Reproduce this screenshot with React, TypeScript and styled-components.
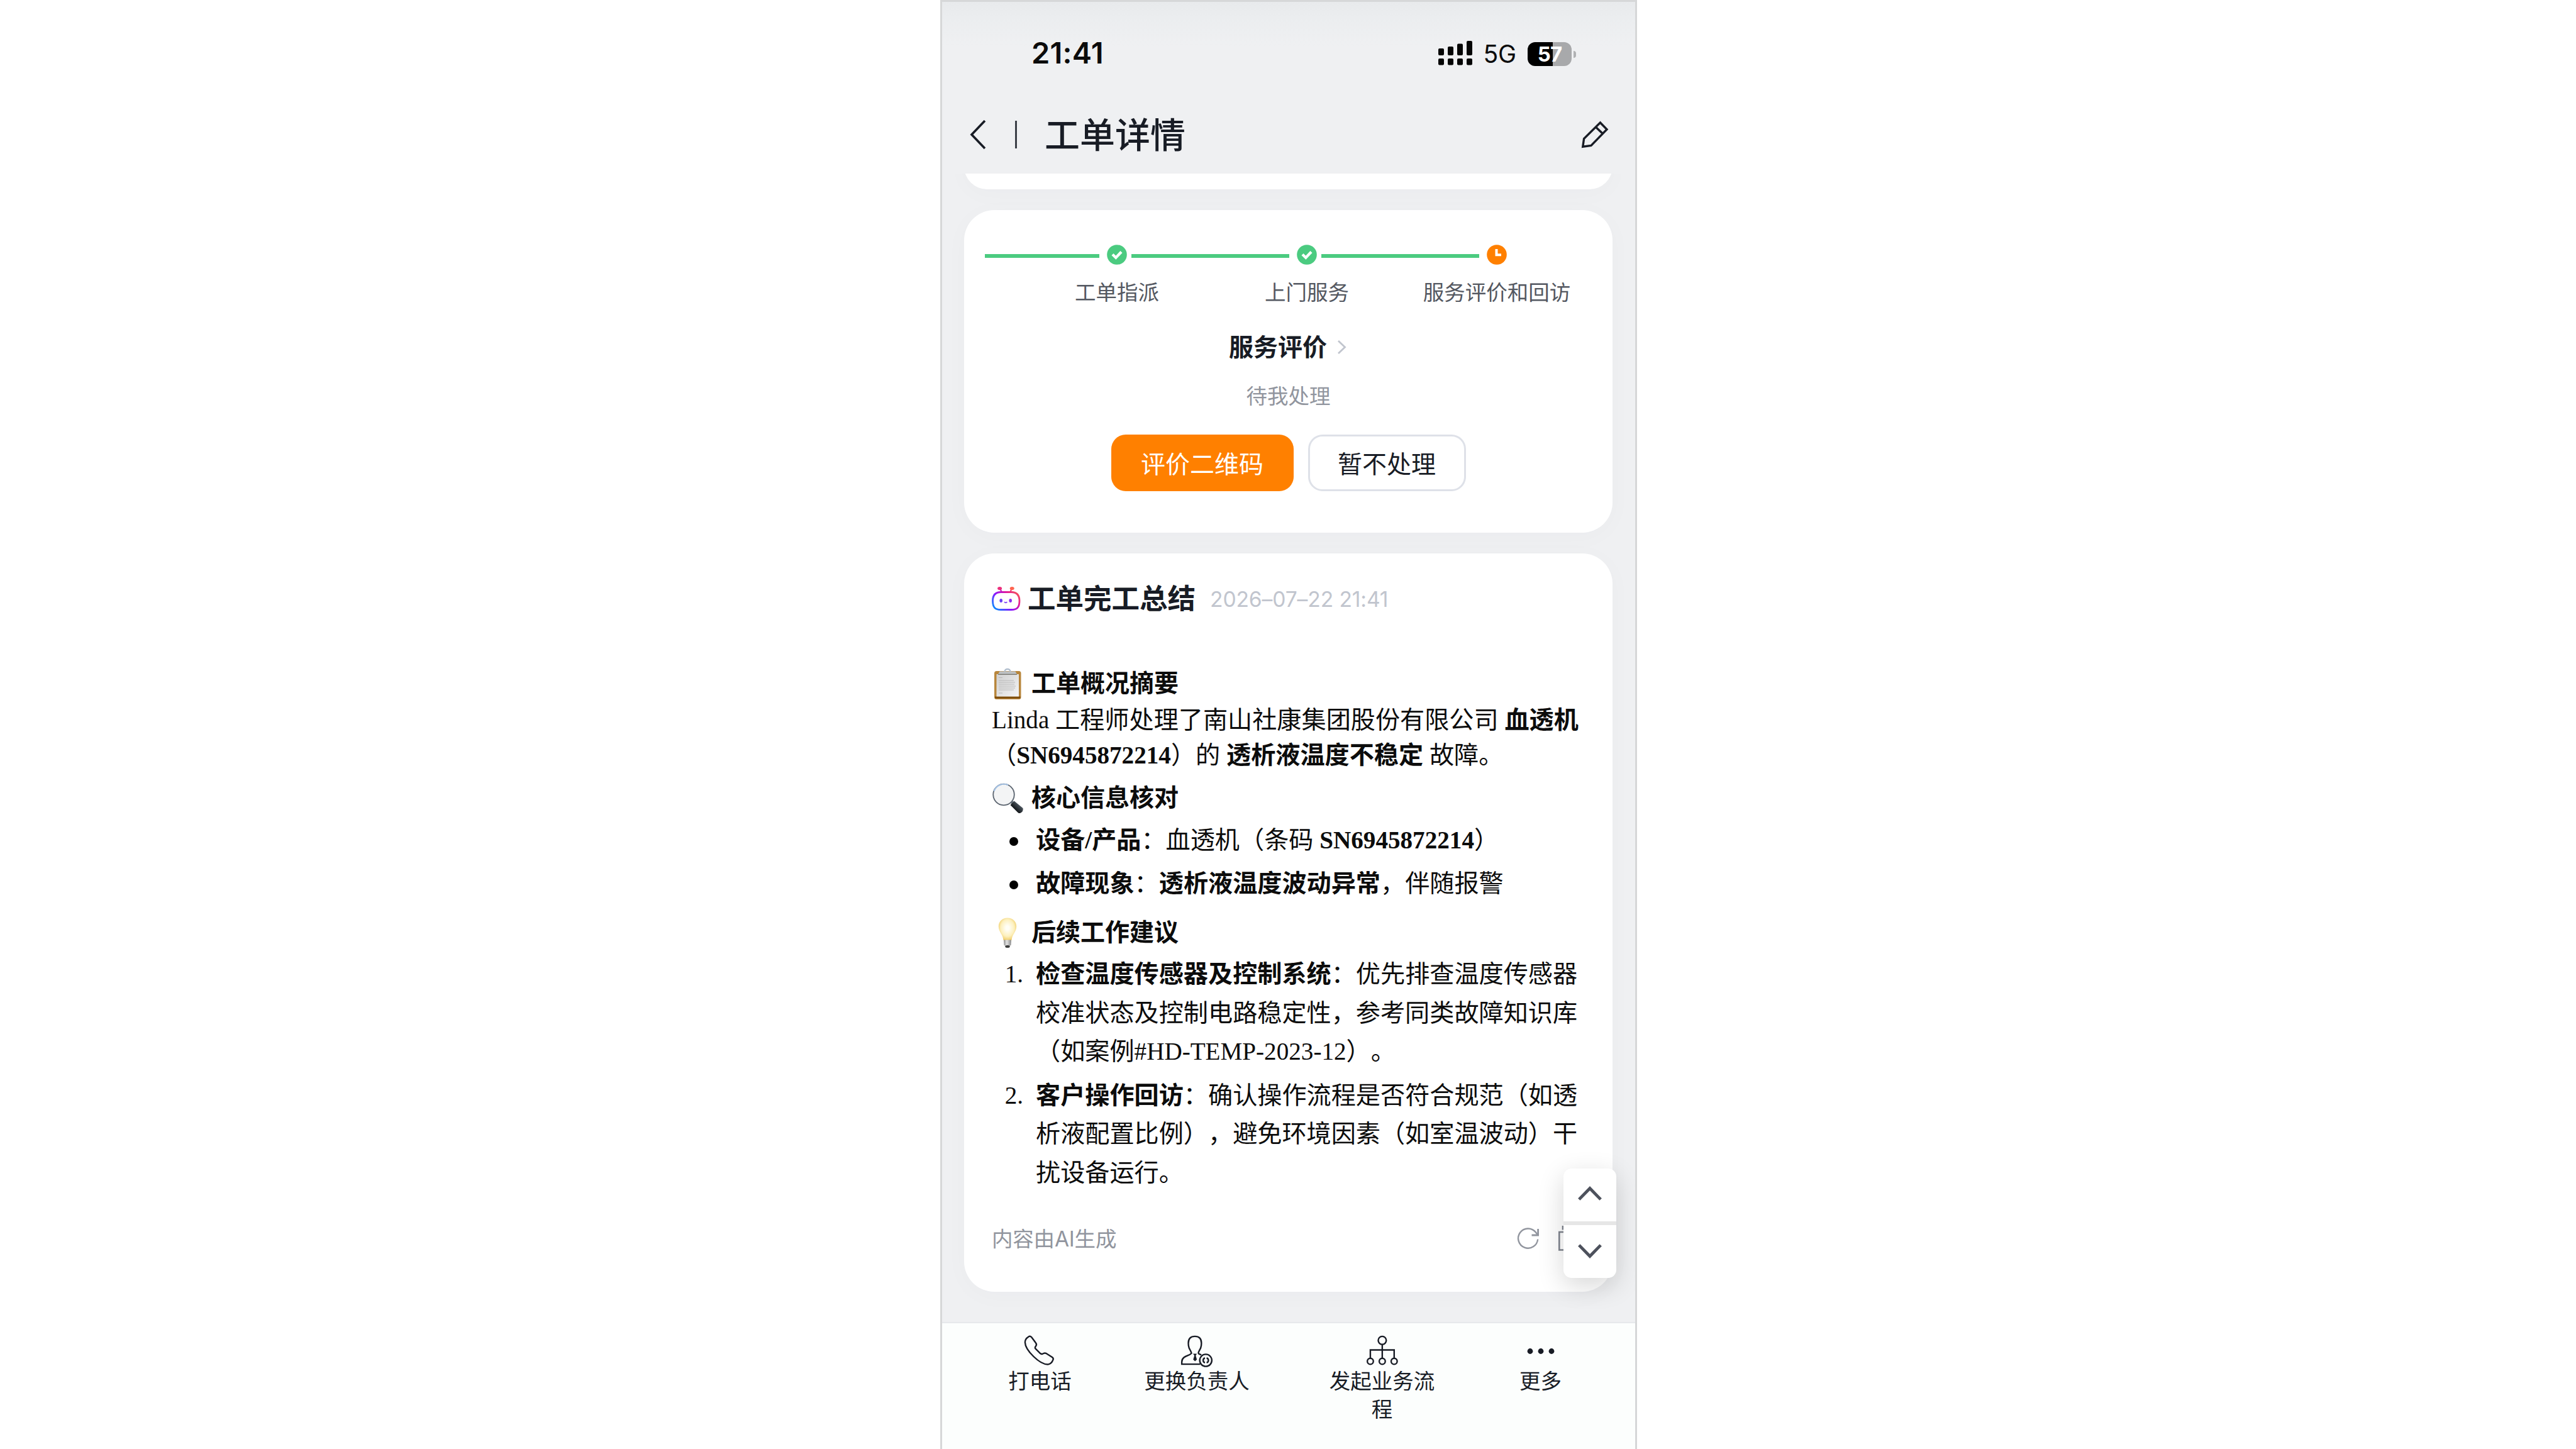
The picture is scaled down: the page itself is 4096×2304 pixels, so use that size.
import React from 'react';
import styled, { createGlobalStyle, css } from 'styled-components';

const sans = `Inter, "Noto Sans CJK SC", sans-serif`;
const serif = `"Liberation Serif", "Noto Sans CJK SC", serif`;

const GlobalStyle = createGlobalStyle`
  * {
    box-sizing: border-box;
  }

  body {
    margin: 0;
    background: #fff;
    font-family: ${sans};
    text-spacing-trim: space-all;
    color: #181c25;
  }

  svg {
    display: block;
    flex: none;
    overflow: visible;
  }
`;

const Page = styled.div`
  height: 2304px;
  padding-left: 1495px;
  overflow: hidden;
`;

const Phone = styled.div`
  display: flex;
  flex-direction: column;
  width: 1108px;
  height: 2304px;
  border: 3px solid #d6d7d8;
  border-bottom: 0;
  background: #eff0f2;
  position: relative;
  overflow: hidden;
`;

const Header = styled.header`
  flex: none;
  height: 273px;
  background: linear-gradient(#e8eaec 0, #ebedef 24px, #eff0f2 70px);
`;

const StatusBar = styled.div`
  display: flex;
  align-items: center;
  height: 162px;
  padding: 0 101px 0 142px;
`;

const Clock = styled.span`
  font-size: 47px;
  font-weight: 600;
  line-height: 56px;
  letter-spacing: 0.2px;
  color: #0b0b0b;
  margin-right: auto;
`;

const Network = styled.span`
  margin: 4px 0 0 18px;
  font-size: 39px;
  font-weight: 400;
  line-height: 48px;
  letter-spacing: -0.2px;
  color: #0b0b0b;
`;

const Battery = styled.div`
  display: flex;
  align-items: center;
  justify-content: center;
  position: relative;
  width: 70px;
  height: 38px;
  margin: 3px 0 0 18px;
  border-radius: 12px;
  background: linear-gradient(90deg, #000 40px, #a8a9ab 40px);
  font-size: 33px;
  font-weight: 700;
  line-height: 38px;
  letter-spacing: -1px;
  color: #fff;

  &::after {
    content: '';
    position: absolute;
    left: 73px;
    top: 14px;
    width: 4px;
    height: 11px;
    border-radius: 0 4px 4px 0;
    background: #b0b1b3;
  }
`;

const NavBar = styled.nav`
  display: flex;
  align-items: center;
  height: 98px;
  padding: 0 43px 0 44px;
`;

const NavDivider = styled.i`
  width: 3px;
  height: 44px;
  margin: 0 44px 0 46px;
  background: #3c4048;
`;

const NavTitle = styled.h1`
  margin: 2px auto 0 0;
  font-size: 56px;
  font-weight: 500;
  line-height: 80px;
`;

const Content = styled.main`
  flex: 1;
  min-height: 0;
  padding: 0 36px 0 35px;
  overflow: hidden;
`;

const cardStyle = css`
  background: #fff;
  border-radius: 48px;
  box-shadow: 0 6px 40px rgba(40, 60, 90, 0.025);
`;

const PreviousCard = styled.section`
  ${cardStyle}
  height: 73px;
  margin-top: -48px;
`;

const FlowCard = styled.section`
  ${cardStyle}
  height: 513px;
  margin-top: 33px;
  padding-top: 55px;
`;

const Steps = styled.div`
  display: grid;
  grid-template-columns: repeat(3, 302px);
  padding-left: 92px;
`;

const Step = styled.div`
  display: flex;
  flex-direction: column;
  align-items: center;
  position: relative;
`;

const StepLine = styled.i<{ $width: number }>`
  position: absolute;
  top: 15px;
  right: 179px;
  width: ${({ $width }) => $width}px;
  height: 6px;
  background: #4bcb80;
`;

const StepLabel = styled.span`
  margin-top: 19px;
  font-size: 33.5px;
  line-height: 50px;
  white-space: nowrap;
  color: #545861;
`;

const Task = styled.div`
  display: flex;
  flex-direction: column;
  align-items: center;
`;

const TaskTitle = styled.h2`
  display: flex;
  align-items: center;
  gap: 17px;
  margin: 34px 2px 0 0;
  font-size: 39px;
  font-weight: 700;
  line-height: 56px;
`;

const TaskState = styled.span`
  margin-top: 27px;
  font-size: 33.5px;
  line-height: 46px;
  color: #91959e;
`;

const Actions = styled.div`
  display: flex;
  gap: 23px;
  margin-top: 38px;
`;

const Button = styled.button<{ $primary?: boolean }>`
  width: ${({ $primary }) => ($primary ? 290 : 251)}px;
  height: 90px;
  padding: 0 0 3px;
  border: ${({ $primary }) => ($primary ? '0' : '3px solid #dee1e8')};
  border-radius: 23px;
  background: ${({ $primary }) => ($primary ? '#ff8000' : '#fff')};
  color: ${({ $primary }) => ($primary ? '#fff' : '#181c25')};
  font-family: ${sans};
  font-size: 39px;
`;

const SummaryCard = styled.section`
  ${cardStyle}
  height: 1174px;
  margin-top: 33px;
  padding: 40px 52px 0 44px;
`;

const SummaryHead = styled.div`
  display: flex;
  align-items: center;
  height: 64px;
`;

const SummaryTitle = styled.h2`
  margin: 0 23px 0 11px;
  font-size: 44.5px;
  font-weight: 700;
  line-height: 64px;
`;

const SummaryDate = styled.time`
  font-size: 33.6px;
  letter-spacing: -0.1px;
  color: #c1c5ce;
`;

const Report = styled.article`
  margin-top: 75px;
  font-family: ${serif};
  font-size: 39.15px;
  line-height: 56px;
  white-space: nowrap;
  color: #0c0c0c;

  p {
    margin: 2px 0 0;
  }
`;

const ReportHeading = styled.h3<{ $top?: number }>`
  display: flex;
  align-items: center;
  gap: 13px;
  height: 56px;
  margin: ${({ $top = 0 }) => $top}px 0 0;
  font-size: 39px;
  font-weight: 700;
`;

const ReportList = styled.div<{ $top: number; $gap: number }>`
  display: flex;
  flex-direction: column;
  gap: ${({ $gap }) => $gap}px;
  margin-top: ${({ $top }) => $top}px;
  line-height: 61.7px;
`;

const ReportItem = styled.div`
  display: grid;
  grid-template-columns: 50px 1fr;
  column-gap: 20px;
`;

const Marker = styled.span`
  text-align: right;
`;

const Bullet = styled.i`
  justify-self: end;
  width: 14px;
  height: 14px;
  margin: 26px 8px 0 0;
  border-radius: 50%;
  background: #000;
`;

const SummaryFoot = styled.div`
  display: flex;
  align-items: center;
  height: 50px;
  margin-top: 47px;
  font-size: 33.5px;
  letter-spacing: -0.2px;
  color: #91959e;
`;

const FootIcons = styled.div`
  display: flex;
  align-items: center;
  gap: 31px;
  margin: 3px 0 0 auto;
`;

const Pager = styled.div`
  position: absolute;
  left: 988px;
  top: 1855px;
  width: 84px;
  border-radius: 13px;
  background: #fff;
  box-shadow: 0 12px 42px rgba(0, 0, 0, 0.16);
`;

const PagerButton = styled.div`
  display: flex;
  align-items: center;
  justify-content: center;
  height: 84px;
  padding-bottom: 6px;

  & + & {
    height: 90px;
    padding-bottom: 1px;
    border-top: 6px solid #e6e6e6;
  }
`;

const TabBar = styled.footer`
  flex: none;
  display: grid;
  grid-template-columns: 249px 250px 339px 165px;
  height: 202px;
  padding: 19px 0 0 31px;
  border-top: 2px solid #e6e8eb;
  background: #fcfefd;
`;

const Tab = styled.div`
  display: flex;
  flex-direction: column;
  align-items: center;
  gap: 3px;
`;

const TabIcon = styled.div`
  display: flex;
  height: 48px;
`;

const TabLabel = styled.span`
  width: 172px;
  font-size: 33.5px;
  line-height: 45px;
  text-align: center;
`;

const SignalIcon = () => (
  <svg width="54" height="39" fill="#050505">
    <rect x="0" y="12" width="9" height="11" rx="2" />
    <rect x="15" y="9" width="9" height="14" rx="2" />
    <rect x="30" y="4.5" width="9" height="18.5" rx="2" />
    <rect x="45" y="0" width="9" height="23" rx="2" />
    {[0, 15, 30, 45].map((x) => (
      <rect key={x} x={x} y="28" width="9" height="10.5" rx="2" />
    ))}
  </svg>
);

const BackIcon = () => (
  <svg width="26" height="46" fill="none" stroke="#181c25" strokeWidth="3.6">
    <path d="M24 1 L3 23 L24 45" />
  </svg>
);

const PencilIcon = () => (
  <svg width="42" height="42" fill="none" stroke="#181c25" strokeWidth="3.4">
    <path d="M1.8 40.3 L3.6 27.5 L29.5 2 L40 12.8 L15 38.4 Z M22.3 9 L33.5 19.6" />
  </svg>
);

const CheckDot = () => (
  <svg width="32" height="32" viewBox="0 0 32 32" fill="none">
    <circle cx="16" cy="16" r="15.8" fill="#4bcb80" />
    <path d="M9 15.5 L14.3 20.7 L23 11.5" stroke="#fff" strokeWidth="4.4" />
  </svg>
);

const ClockDot = () => (
  <svg width="32" height="32" viewBox="0 0 32 32" fill="none">
    <circle cx="16" cy="16" r="15.8" fill="#ff8000" />
    <path d="M15.5 7 V16.3 H23" stroke="#fff" strokeWidth="4" />
  </svg>
);

const ChevronRight = () => (
  <svg width="14" height="22" fill="none" stroke="#c1c5ce" strokeWidth="2.8">
    <path d="M1 1 L11.5 11 L1 21" />
  </svg>
);

const RobotIcon = () => (
  <svg width="46" height="40" viewBox="0 0 46 40" fill="none">
    <defs>
      <linearGradient id="robot" x1="4" y1="38" x2="40" y2="2" gradientUnits="userSpaceOnUse">
        <stop offset="0.05" stopColor="#0f86ff" />
        <stop offset="0.38" stopColor="#8a16ff" />
        <stop offset="0.66" stopColor="#e0189c" />
        <stop offset="1" stopColor="#ff6a3c" />
      </linearGradient>
    </defs>
    <path
      d="M14.5 9.5 H31 C40 9.5 44 14 44 23.5 C44 34 40 37.5 31 37.5 H14.5 C5.5 37.5 1.5 34 1.5 23.5 C1.5 14 5.5 9.5 14.5 9.5 Z"
      stroke="url(#robot)"
      strokeWidth="2.8"
    />
    <path d="M15.5 9 L13.5 4.5 M29.5 9 L31.5 4.5" stroke="url(#robot)" strokeWidth="2" />
    <ellipse cx="12.6" cy="3.6" rx="3.5" ry="2.6" fill="#ec2f7c" />
    <ellipse cx="32.2" cy="3.6" rx="3.5" ry="2.6" fill="#ff6450" />
    <ellipse cx="14.7" cy="23" rx="2.3" ry="3" fill="#6a3df5" />
    <ellipse cx="29.7" cy="23" rx="2.3" ry="3" fill="#8a2df0" />
    <path d="M20 25.2 Q22.2 27.5 24.4 25.2" stroke="#7a3df5" strokeWidth="1.7" />
  </svg>
);

const ClipboardIcon = () => (
  <svg width="50" height="50" viewBox="0 0 50 50">
    <defs>
      <linearGradient id="paper" x1="0" y1="0" x2="1" y2="1">
        <stop offset="0" stopColor="#d0d0d0" />
        <stop offset="1" stopColor="#f4f4f4" />
      </linearGradient>
    </defs>
    <rect x="4" y="5" width="42.5" height="45" rx="3.5" fill="#b8863c" />
    <rect x="5" y="45.5" width="40.5" height="3" fill="#7d4d0c" />
    <rect x="7.5" y="10" width="35.5" height="35.5" fill="url(#paper)" />
    <path
      d="M11 15.5 h6 M11 20 h24 M11 23 h26 M11 26 h25 M11 29 h27 M11 32 h26 M11 35 h24 M11 40 h6"
      stroke="#b9b9b9"
      strokeWidth="1.2"
    />
    <path d="M20.5 6 C20.5 0.5 29.5 0.5 29.5 6" fill="none" stroke="#aebccb" strokeWidth="2.2" />
    <path d="M12.5 5.5 H37.5 L40 10 H10 Z" fill="#bdc0c2" />
    <path d="M10 9.7 H40 V11 H10 Z" fill="#76736c" />
  </svg>
);

const MagnifierIcon = () => (
  <svg width="50" height="50" viewBox="0 0 50 50">
    <defs>
      <linearGradient id="handle" x1="0" y1="1" x2="1" y2="0">
        <stop offset="0.3" stopColor="#0d1013" />
        <stop offset="0.75" stopColor="#555f69" />
      </linearGradient>
    </defs>
    <path d="M29 29 L34 33.5" stroke="#6d7881" strokeWidth="5" />
    <circle cx="19" cy="19.5" r="16.8" fill="#f3f4f5" stroke="#5c6570" strokeWidth="1.8" />
    <path d="M3.5 14 A16.8 16.8 0 0 1 26 4.2" fill="none" stroke="#a5c2e4" strokeWidth="2.2" />
    <path d="M29.5 36 L35.5 29.5 L49.5 41 Q51 46 45 49 Q42.5 49.5 41 47.5 Z" fill="url(#handle)" />
  </svg>
);

const BulbIcon = () => (
  <svg width="50" height="50" viewBox="0 0 50 50">
    <defs>
      <radialGradient id="glass" cx="0.5" cy="0.45" r="0.58">
        <stop offset="0.15" stopColor="#fffef6" />
        <stop offset="0.65" stopColor="#fdf0bd" />
        <stop offset="1" stopColor="#efc95f" />
      </radialGradient>
      <linearGradient id="cap">
        <stop offset="0" stopColor="#8d8d8d" />
        <stop offset="0.4" stopColor="#e4e4e4" />
        <stop offset="1" stopColor="#8b8b8b" />
      </linearGradient>
    </defs>
    <path
      d="M25 1.5 C33.5 1.5 39.2 7.5 39.2 15 C39.2 24 32.5 27 31.5 37 H18.5 C17.5 27 10.8 24 10.8 15 C10.8 7.5 16.5 1.5 25 1.5 Z"
      fill="url(#glass)"
    />
    <path d="M19 36.5 H31 L30.5 45 Q25 48.5 19.5 45 Z" fill="url(#cap)" />
    <ellipse cx="25" cy="47" rx="3.8" ry="2" fill="#3c3c3c" />
  </svg>
);

const RefreshIcon = () => (
  <svg width="34" height="34" fill="none" stroke="#91959e" strokeWidth="2.4">
    <path d="M32.2 18.5 A15.6 15.6 0 1 1 29 7.5 L32 11.5" />
    <path d="M32.6 2 V12 H22.5" strokeWidth="2.8" />
  </svg>
);

const CopyIcon = () => (
  <svg width="34" height="40" fill="none" stroke="#7f848e" strokeWidth="2.6">
    <path d="M1.3 10 H24 V38.5 H1.3 Z M7 6.5 V1.3 H32 V30 H28" />
  </svg>
);

const PagerArrow = ({ down }: { down?: boolean }) => (
  <svg width="38" height="23" fill="none" stroke="#4d515c" strokeWidth="4.8">
    <path d={down ? 'M1.8 1.8 L19 19.5 L36.2 1.8' : 'M1.8 21.2 L19 3.5 L36.2 21.2'} />
  </svg>
);

const PhoneIcon = () => (
  <svg width="52" height="48" viewBox="0 0 195 180" fill="none" stroke="#181c25" strokeWidth="9">
    <path d="M28 9 Q37 2 46 12 L71 46 Q79 56 71 66 Q64 75 69 80 L98 109 Q105 114 111 112 Q122 104 132 108 L170 132 Q178 138 174 147 Q166 170 146 174 C96 178 8 90 7 42 Q7 22 28 9 Z" />
  </svg>
);

const OwnerIcon = () => (
  <svg width="52" height="51.5" viewBox="0 0 195 193" fill="none" stroke="#181c25" strokeWidth="9">
    <path d="M65 110 C68 98 50 85 48 62 L47 48 C47 18 65 7 86 7 C107 7 125 18 125 48 L124 62 C122 85 104 98 107 108 C109 113 116 113 124 118" />
    <path d="M65 106 C64 124 8 118 8 160 V173 H118" />
    <path d="M75 111 H98 L91 122 L98 145 L87 156 L76 145 L83 122 Z" fill="#181c25" stroke="none" />
    <circle cx="151" cy="150" r="36" />
    <path d="M146 136 A14.5 14.5 0 0 0 146 164 M156 136 A14.5 14.5 0 0 1 156 164" />
  </svg>
);

const FlowIcon = () => (
  <svg width="52" height="48" viewBox="0 0 195 180" fill="none" stroke="#181c25" strokeWidth="9">
    <circle cx="97" cy="31" r="24" />
    <circle cx="26" cy="156" r="18" />
    <circle cx="97" cy="156" r="18" />
    <circle cx="168" cy="156" r="18" />
    <path d="M97 55 V138 M26 138 V88 H168 V138" />
  </svg>
);

const MoreIcon = () => (
  <svg width="44" height="48" fill="#181c25">
    <circle cx="5" cy="25.5" r="4.4" />
    <circle cx="22" cy="25.5" r="4.4" />
    <circle cx="39" cy="25.5" r="4.4" />
  </svg>
);

const steps = [
  { label: '工单指派', line: 182, icon: <CheckDot /> },
  { label: '上门服务', line: 251, icon: <CheckDot /> },
  { label: '服务评价和回访', line: 251, icon: <ClockDot /> },
];

const tabs = [
  { label: '打电话', icon: <PhoneIcon /> },
  { label: '更换负责人', icon: <OwnerIcon /> },
  { label: '发起业务流程', icon: <FlowIcon /> },
  { label: '更多', icon: <MoreIcon /> },
];

const App: React.FC = () => (
  <>
    <GlobalStyle />
    <Page>
      <Phone lang="zh-CN">
        <Header>
          <StatusBar>
            <Clock>21:41</Clock>
            <SignalIcon />
            <Network>5G</Network>
            <Battery>57</Battery>
          </StatusBar>
          <NavBar>
            <BackIcon />
            <NavDivider />
            <NavTitle>工单详情</NavTitle>
            <PencilIcon />
          </NavBar>
        </Header>

        <Content>
          <PreviousCard />

          <FlowCard>
            <Steps>
              {steps.map((step) => (
                <Step key={step.label}>
                  <StepLine $width={step.line} />
                  {step.icon}
                  <StepLabel>{step.label}</StepLabel>
                </Step>
              ))}
            </Steps>
            <Task>
              <TaskTitle>
                服务评价
                <ChevronRight />
              </TaskTitle>
              <TaskState>待我处理</TaskState>
              <Actions>
                <Button $primary>评价二维码</Button>
                <Button>暂不处理</Button>
              </Actions>
            </Task>
          </FlowCard>

          <SummaryCard>
            <SummaryHead>
              <RobotIcon />
              <SummaryTitle>工单完工总结</SummaryTitle>
              <SummaryDate>2026–07–22 21:41</SummaryDate>
            </SummaryHead>

            <Report>
              <ReportHeading>
                <ClipboardIcon />
                工单概况摘要
              </ReportHeading>
              <p>
                Linda 工程师处理了南山社康集团股份有限公司 <b>血透机</b>
                <br />（<b>SN6945872214</b>）的 <b>透析液温度不稳定</b> 故障。
              </p>

              <ReportHeading $top={12}>
                <MagnifierIcon />
                核心信息核对
              </ReportHeading>
              <ReportList $top={8} $gap={7.5}>
                <ReportItem>
                  <Bullet />
                  <span>
                    <b>设备/产品</b>：血透机（条码 <b>SN6945872214</b>）
                  </span>
                </ReportItem>
                <ReportItem>
                  <Bullet />
                  <span>
                    <b>故障现象</b>：<b>透析液温度波动异常</b>，伴随报警
                  </span>
                </ReportItem>
              </ReportList>

              <ReportHeading $top={19}>
                <BulbIcon />
                后续工作建议
              </ReportHeading>
              <ReportList $top={7} $gap={7.5}>
                <ReportItem>
                  <Marker>1.</Marker>
                  <span>
                    <b>检查温度传感器及控制系统</b>：优先排查温度传感器
                    <br />
                    校准状态及控制电路稳定性，参考同类故障知识库
                    <br />
                    （如案例#HD-TEMP-2023-12）。
                  </span>
                </ReportItem>
                <ReportItem>
                  <Marker>2.</Marker>
                  <span>
                    <b>客户操作回访</b>：确认操作流程是否符合规范（如透
                    <br />
                    析液配置比例），避免环境因素（如室温波动）干
                    <br />
                    扰设备运行。
                  </span>
                </ReportItem>
              </ReportList>
            </Report>

            <SummaryFoot>
              内容由AI生成
              <FootIcons>
                <RefreshIcon />
                <CopyIcon />
              </FootIcons>
            </SummaryFoot>
          </SummaryCard>
        </Content>

        <TabBar>
          {tabs.map((tab) => (
            <Tab key={tab.label}>
              <TabIcon>{tab.icon}</TabIcon>
              <TabLabel>{tab.label}</TabLabel>
            </Tab>
          ))}
        </TabBar>

        <Pager>
          <PagerButton>
            <PagerArrow />
          </PagerButton>
          <PagerButton>
            <PagerArrow down />
          </PagerButton>
        </Pager>
      </Phone>
    </Page>
  </>
);

export default App;
